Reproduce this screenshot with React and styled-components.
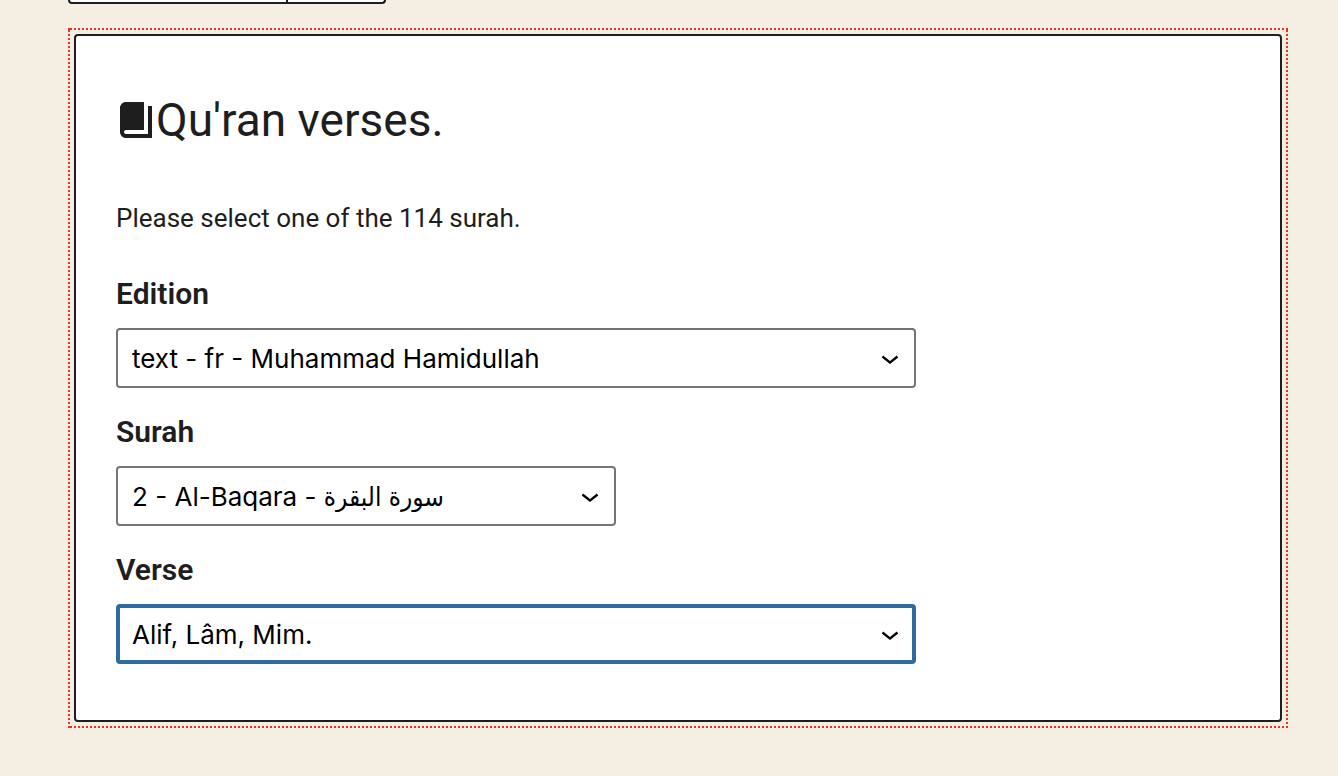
import React from "react";
import styled, { createGlobalStyle, css } from "styled-components";

const GlobalStyle = createGlobalStyle`
  *, *::before, *::after { box-sizing: border-box; }
  body {
    margin: 0;
    background: #f5eee3;
    color: #1e1e1e;
    font-family: Roboto, "Liberation Sans", "DejaVu Sans", sans-serif;
  }
`;

const Editor = styled.main`
  display: flex;
  flex-direction: column;
  align-items: flex-start;
  gap: 24px;
  padding: 0 50px 48px 68px;
`;

const Toolbar = styled.div`
  display: flex;
  height: 4px;
  background: #fff;
  border: 2px solid #1e1e1e;
  border-top: 0;
  border-radius: 0 0 4px 4px;
`;

const ToolbarGroup = styled.span`
  width: ${(p) => p.$width}px;
  & + & { border-left: 2px solid #1e1e1e; }
`;

const dots = (direction) => css`repeating-linear-gradient(${direction}, transparent 0 2px, #ee3023 2px 4px)`;

const BlockOutline = styled.div`
  width: 100%;
  padding: 6px;
  background:
    linear-gradient(#ee3023, #ee3023) left top / 2px 2px no-repeat,
    ${dots("to right")} left top / 100% 2px no-repeat,
    ${dots("to right")} left bottom / 100% 2px no-repeat,
    ${dots("to bottom")} left top / 2px 100% no-repeat,
    ${dots("to bottom")} right top / 2px 100% no-repeat;
`;

const Card = styled.section`
  padding: 50px 40px 56px;
  background: #fff;
  border: 2px solid #1e1e1e;
  border-radius: 4px;
`;

const Title = styled.h1`
  display: flex;
  align-items: center;
  margin: 0 0 44px;
  font-size: 46px;
  font-weight: 400;
  line-height: 68px;
`;

const BookIcon = styled.svg`
  flex: none;
  width: 40px;
  height: 40px;
  fill: currentColor;
`;

const Instructions = styled.p`
  margin: 0 0 38px;
  font-size: 26px;
  line-height: 40px;
`;

const Fields = styled.div`
  display: flex;
  flex-direction: column;
  gap: 26px;
`;

const Field = styled.div`
  display: flex;
  flex-direction: column;
  gap: 16px;
`;

const Label = styled.label`
  font-size: 30px;
  font-weight: 600;
  line-height: 36px;
`;

const SelectBox = styled.div`
  display: grid;
  align-items: center;
  width: 100%;
  max-width: ${(p) => p.$width}px;
  & > * { grid-area: 1 / 1; }
`;

const Select = styled.select`
  appearance: none;
  width: 100%;
  height: 60px;
  margin: 0;
  padding: 0 52px 0 ${(p) => (p.$active ? 12 : 14)}px;
  background: #fff;
  border: ${(p) => (p.$active ? "4px solid #2d6ca2" : "2px solid #757575")};
  border-radius: 4px;
  outline: 0;
  color: #000;
  font-family: Inter, "DejaVu Sans Condensed", "DejaVu Sans", sans-serif;
  font-size: 26px;
`;

const Chevron = styled.svg`
  justify-self: end;
  width: 36px;
  height: 36px;
  margin-right: 8px;
  fill: #000;
  pointer-events: none;
`;

function SelectField({ id, label, value, width, active }) {
  return (
    <Field>
      <Label htmlFor={id}>{label}</Label>
      <SelectBox $width={width}>
        <Select id={id} $active={active}>
          <option>{value}</option>
        </Select>
        <Chevron viewBox="0 0 24 24" aria-hidden="true">
          <path d="M17.5 11.6L12 16l-5.5-4.4.9-1.2L12 14l4.5-3.6 1 1.2z" />
        </Chevron>
      </SelectBox>
    </Field>
  );
}

export default function App() {
  return (
    <>
      <GlobalStyle />
      <Editor>
        <Toolbar>
          <ToolbarGroup $width={216} />
          <ToolbarGroup $width={98} />
        </Toolbar>
        <BlockOutline>
          <Card>
            <Title>
              <BookIcon viewBox="0 0 20 20" aria-hidden="true">
                <path d="M16 3h2v16H5c-1.66 0-3-1.34-3-3V4c0-1.66 1.34-3 3-3h9v14H5c-.55 0-1 .45-1 1s.45 1 1 1h11V3z" />
              </BookIcon>
              Qu'ran verses.
            </Title>
            <Instructions>Please select one of the 114 surah.</Instructions>
            <Fields>
              <SelectField id="edition" label="Edition" value="text - fr - Muhammad Hamidullah" width={800} />
              <SelectField id="surah" label="Surah" value="2 - Al-Baqara - سورة البقرة" width={500} />
              <SelectField id="verse" label="Verse" value="Alif, Lâm, Mim." width={800} active />
            </Fields>
          </Card>
        </BlockOutline>
      </Editor>
    </>
  );
}
